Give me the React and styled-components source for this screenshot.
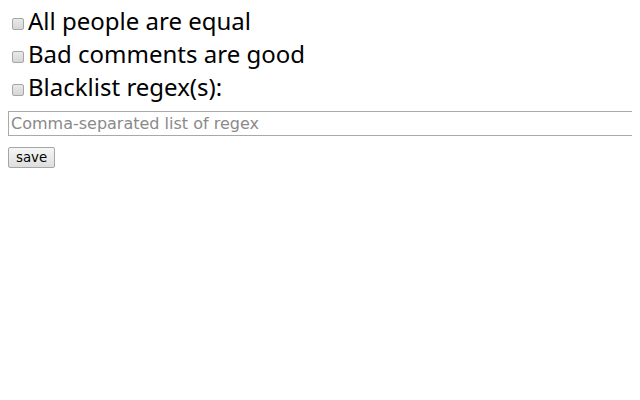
import React from 'react';
import styled, { createGlobalStyle } from 'styled-components';

const GlobalStyle = createGlobalStyle`
	body {
		margin: 4px 8px 8px;
		background: #fff;
		font-family: "DejaVu Sans", sans-serif;
	}
`;

const Option = styled.div`
	font-family: "Noto Sans", sans-serif;
	font-size: 24px;
	line-height: 33px;
	height: 33px;
	color: #000;
	white-space: nowrap;
`;

const Check = styled.input.attrs({ type: 'checkbox' })`
	appearance: none;
	box-sizing: border-box;
	width: 12px;
	height: 12px;
	margin: 0 4px 0 4px;
	vertical-align: baseline;
	border: 1px solid #a6a6a6;
	border-radius: 2px;
	background: linear-gradient(#e9e9e9, #d6d6d6);
	&:checked {
		background: #4a90e2;
	}
`;

const RegexInput = styled.input`
	display: block;
	box-sizing: border-box;
	width: calc(100% + 8px);
	margin: 8px 0 0;
	padding: 2px 2px;
	font-family: "DejaVu Sans", sans-serif;
	font-size: 16px;
	border: 1px solid #a9a9a9;
	border-right: none;
	&::placeholder {
		color: #8a8a8a;
	}
`;

const SaveButton = styled.button`
	margin-top: 11px;
	font-family: "DejaVu Sans", sans-serif;
	font-size: 13.33px;
	padding: 2px 7px;
	border: 1px solid #a6a6a6;
	border-radius: 2px;
	background: linear-gradient(#f6f6f6, #dedede);
	color: #000;
`;

const options = [
	{ id: 'equal', label: 'All people are equal' },
	{ id: 'bad', label: 'Bad comments are good' },
	{ id: 'blacklist', label: 'Blacklist regex(s):' }
];

export default function App() {
	return (
		<>
			<GlobalStyle />
			{options.map(o => (
				<Option key={o.id}>
					<Check id={o.id} />
					<label htmlFor={o.id}>{o.label}</label>
				</Option>
			))}
			<RegexInput placeholder="Comma-separated list of regex" />
			<SaveButton>save</SaveButton>
		</>
	);
}
